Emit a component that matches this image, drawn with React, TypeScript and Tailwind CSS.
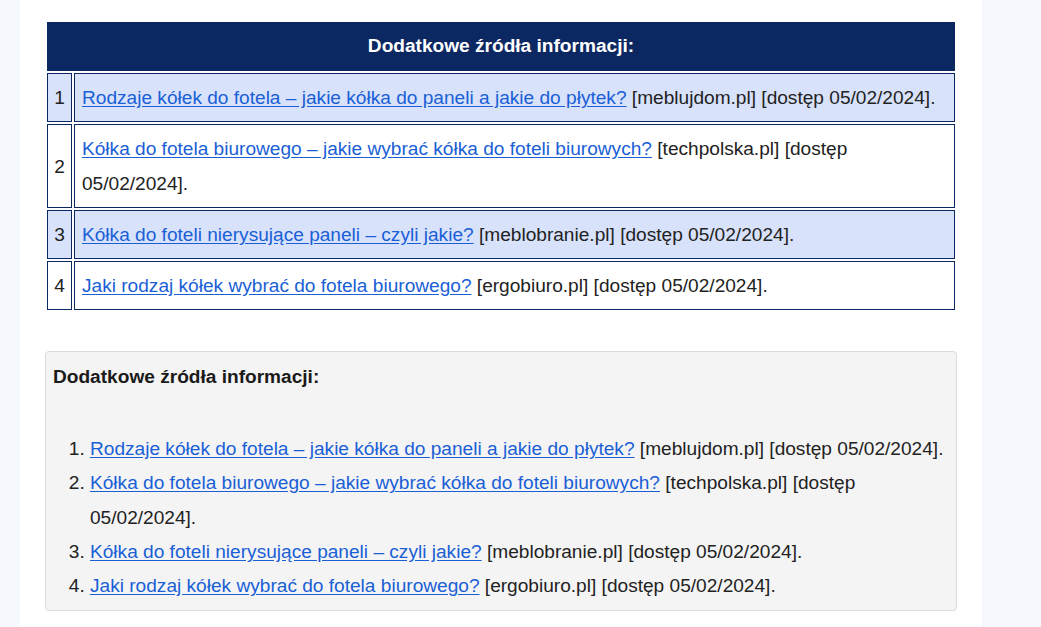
type Source = {
  title: string;
  site: string;
};

const SOURCES: Source[] = [
  { title: "Rodzaje kółek do fotela – jakie kółka do paneli a jakie do płytek?", site: "meblujdom.pl" },
  { title: "Kółka do fotela biurowego – jakie wybrać kółka do foteli biurowych?", site: "techpolska.pl" },
  { title: "Kółka do foteli nierysujące paneli – czyli jakie?", site: "meblobranie.pl" },
  { title: "Jaki rodzaj kółek wybrać do fotela biurowego?", site: "ergobiuro.pl" },
];

const ACCESSED = "05/02/2024";

function SourceText({ src }: { src: Source }) {
  return (
    <>
      <a href="#" className="text-[#1a5fd6] underline underline-offset-2">
        {src.title}
      </a>{" "}
      [{src.site}] [dostęp {ACCESSED}].
    </>
  );
}

export default function App() {
  return (
    <div
      className="flex min-h-[627px] w-full bg-[#f5f8fc] text-[19.1px] text-[#222]"
      style={{ fontFamily: '"Liberation Sans", Arial, sans-serif' }}
    >
      <div className="w-[20px] shrink-0" />

      <main className="w-[962px] shrink-0 bg-white pl-[25px] pt-[20px]">
        {/* Table version */}
        <table className="w-[912px] border-separate border-spacing-[2px]">
          <thead>
            <tr>
              <th
                colSpan={2}
                className="h-[49px] border border-[#0c2862] bg-[#0c2862] text-center font-bold text-white"
              >
                Dodatkowe źródła informacji:
              </th>
            </tr>
          </thead>
          <tbody>
            {SOURCES.map((src, i) => (
              <tr key={src.site} className={i % 2 === 0 ? "bg-[#d8e2fb]" : "bg-white"}>
                <td className="w-[25px] border border-[#0c2862] text-center leading-[35px]">
                  {i + 1}
                </td>
                <td className="border border-[#0c2862] px-[7px] py-[6px] leading-[35px]">
                  <SourceText src={src} />
                </td>
              </tr>
            ))}
          </tbody>
        </table>

        {/* Box version */}
        <div className="mt-[39px] w-[912px] rounded-[4px] border border-[#dcdcdc] bg-[#f4f4f4] px-[7px] pb-[7px] pt-[7px]">
          <p className="font-bold leading-[35px] text-[#1a1a1a]">Dodatkowe źródła informacji:</p>
          <ol className="mt-[38px] list-decimal pl-[37px] leading-[34.3px]">
            {SOURCES.map((src) => (
              <li key={src.site}>
                <SourceText src={src} />
              </li>
            ))}
          </ol>
        </div>
      </main>

      <div className="flex-1" />
    </div>
  );
}
